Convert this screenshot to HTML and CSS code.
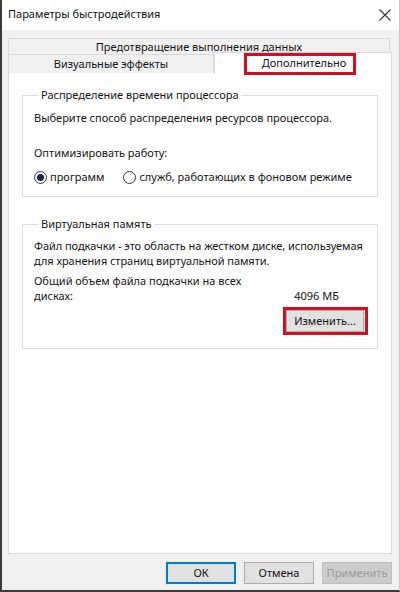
FILE: index.html
```html
<!DOCTYPE html>
<html lang="ru">
<head>
<meta charset="utf-8">
<title>Параметры быстродействия</title>
<link rel="stylesheet" href="styles.css">
</head>
<body>
<div class="window">
  <div class="titlebar">
    <span class="title">Параметры быстродействия</span>
    <svg class="close" width="12" height="12" viewBox="0 0 12 12"><path d="M0.5 0.5L11.5 11.5M11.5 0.5L0.5 11.5" stroke="#333" stroke-width="1.1" fill="none"/></svg>
  </div>
  <div class="body">
    <div class="tabs">
      <div class="tabrow">
        <div class="tab tab-full">Предотвращение выполнения данных</div>
      </div>
      <div class="tabrow tabrow-front">
        <div class="tab tab-visual">Визуальные эффекты</div>
        <div class="tab tab-active">Дополнительно<span class="mark mark-tab"></span></div>
      </div>
    </div>
    <div class="panel">
      <fieldset class="group group-cpu">
        <legend class="legend">Распределение времени процессора</legend>
        <p class="line">Выберите способ распределения ресурсов процессора.</p>
        <p class="line line-opt">Оптимизировать работу:</p>
        <div class="radios">
          <span class="radio"><span class="dot dot-checked"></span>программ</span>
          <span class="radio"><span class="dot"></span>служб, работающих в фоновом режиме</span>
        </div>
      </fieldset>
      <fieldset class="group group-vm">
        <legend class="legend">Виртуальная память</legend>
        <p class="para para-wide">Файл подкачки - это область на жестком диске, используемая для хранения страниц виртуальной памяти.</p>
        <div class="total">
          <p class="para total-label">Общий объем файла подкачки на всех дисках:</p>
          <span class="total-value">4096 МБ</span>
        </div>
        <div class="change-row">
          <span class="btn btn-change">Изменить...<span class="mark mark-btn"></span></span>
        </div>
      </fieldset>
    </div>
    <div class="footer">
      <span class="btn btn-foot btn-ok">ОК</span>
      <span class="btn btn-foot">Отмена</span>
      <span class="btn btn-foot btn-disabled">Применить</span>
    </div>
  </div>
</div>
</body>
</html>
```

FILE: styles.css
```css
* { box-sizing: border-box; }
html, body { margin: 0; padding: 0; }
body {
  width: 400px;
  height: 592px;
  overflow: hidden;
  font-family: "Noto Sans", "Open Sans", sans-serif;
  font-size: 11px;
  color: #141414;
  background: #f0f0f0;
}
.window {
  width: 400px;
  height: 592px;
  border-left: 2px solid #3a3a3a;
  border-bottom: 2px solid #3a3a3a;
  border-right: 1px solid #c8c8c8;
  background: #f0f0f0;
  display: flex;
  flex-direction: column;
}
.titlebar {
  height: 30px;
  background: #fff;
  display: flex;
  align-items: center;
  justify-content: space-between;
  padding: 0 8px 2px 6px;
  flex: none;
}
.title { font-size: 11px; color: #111; line-height: 16px; }
.close { display: block; margin-top: 1px; }
.body {
  flex: 1;
  padding: 8px 6px 0 6px;
  display: flex;
  flex-direction: column;
}
.tabs { display: flex; flex-direction: column; }
.tabrow { display: flex; height: 16px; }
.tabrow-front { height: 19px; position: relative; z-index: 2; }
.tab {
  background: #f0f0f0;
  border: 1px solid #d9d9d9;
  border-bottom: none;
  text-align: center;
  line-height: 15px;
}
.tab-full { width: 382px; height: 16px; }
.tab-visual { width: 206px; height: 19px; line-height: 17px; }
.tab-active {
  position: relative;
  width: 178px;
  height: 22px;
  margin-top: -2px;
  background: #fff;
  border-left: 1px solid #d9d9d9;
  line-height: 20px;
  padding-left: 2px;
}
.mark {
  position: absolute;
  border: 3px solid #d0101e;
}
.mark-tab { left: 29px; top: 0px; width: 112px; height: 22px; }
.panel {
  width: 384px;
  height: 482px;
  margin-top: -1px;
  background: #fff;
  border: 1px solid #d9d9d9;
  padding-top: 14px;
  flex: none;
}
.group {
  margin: 0 13px;
  border: 1px solid #dcdcdc;
  padding: 7px 12px 11px 11px;
  min-width: 0;
}
.legend {
  padding: 0 2px;
  margin-left: 5px;
  line-height: 16px;
}
.line { margin: 0; line-height: 16px; }
.line-opt { margin-top: 19px; }
.radios { display: flex; margin-top: 8px; line-height: 16px; gap: 19px; }
.radio { display: flex; align-items: center; }
.dot {
  width: 13px;
  height: 13px;
  border: 1px solid #333;
  border-radius: 50%;
  margin-right: 3px;
  display: flex;
  align-items: center;
  justify-content: center;
  background: #fff;
}
.dot-checked::after {
  content: "";
  width: 7px;
  height: 7px;
  border-radius: 50%;
  background: #23234a;
}
.group-vm { margin-top: 19px; padding-top: 6px; padding-bottom: 16px; padding-right: 2px; }
.para { margin: 0; line-height: 15px; }
.para-wide { letter-spacing: -0.05px; }
.total {
  display: flex;
  justify-content: space-between;
  align-items: flex-end;
  margin-top: 5px;
}
.total-label { width: 222px; }
.total-value { line-height: 15px; margin-right: 36px; }
.change-row { display: flex; justify-content: flex-end; margin-top: 7px; padding-right: 11px; }
.btn {
  display: flex;
  align-items: center;
  justify-content: center;
  background: #e1e1e1;
  border: 1px solid #adadad;
  line-height: 16px;
}
.btn-change { position: relative; width: 78px; height: 22px; }
.mark-btn { left: -4px; top: -4px; width: 85px; height: 28px; }
.footer {
  display: flex;
  justify-content: flex-end;
  gap: 8px;
  margin-top: 8px;
  padding-right: 1px;
}
.btn-foot { width: 70px; height: 22px; }
.btn-ok { border: 2px solid #0078d7; }
.btn-disabled { background: #cccccc; border-color: #bfbfbf; color: #9a9a9a; }
```
